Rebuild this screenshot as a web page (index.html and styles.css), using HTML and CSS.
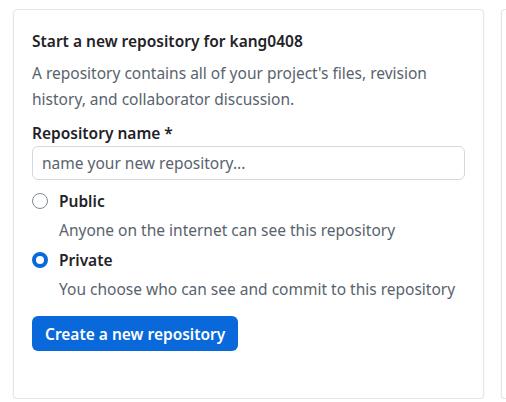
FILE: index.html
```html
<!DOCTYPE html>
<html>
<head>
<meta charset="utf-8">
<link rel="stylesheet" href="styles.css">
</head>
<body>
<div class="layout">
  <div class="card">
    <h2 class="title">Start a new repository for kang0408</h2>
    <p class="desc">A repository contains all of your project's files, revision history, and collaborator discussion.</p>
    <label class="label" for="repo">Repository name *</label>
    <input id="repo" class="input" type="text" placeholder="name your new repository...">
    <div class="option">
      <span class="radio"></span>
      <div class="opt-text">
        <div class="opt-title">Public</div>
        <div class="opt-desc">Anyone on the internet can see this repository</div>
      </div>
    </div>
    <div class="option">
      <span class="radio checked"></span>
      <div class="opt-text">
        <div class="opt-title">Private</div>
        <div class="opt-desc">You choose who can see and commit to this repository</div>
      </div>
    </div>
    <button class="btn">Create a new repository</button>
  </div>
  <div class="card card-next"></div>
</div>
</body>
</html>
```
FILE: styles.css
```css
* { box-sizing: border-box; }
html, body { margin: 0; padding: 0; background: #ffffff; }
body {
  font-family: "Noto Sans", "Open Sans", sans-serif;
  color: #1f2328;
  overflow: hidden;
}
.layout {
  display: flex;
  gap: 17px;
  width: 506px;
  padding: 9px 0 0 13px;
}
.card {
  flex: 0 0 471px;
  height: 390px;
  border: 1px solid #e3e6ea;
  border-radius: 4px;
  box-shadow: 0 1px 2px rgba(31, 35, 40, 0.08);
  padding: 19px 18px;
  background: #fff;
}
.card-next {
  flex: 1 1 auto;
  min-width: 0;
  padding: 0;
  border-right: 0;
  border-radius: 4px 0 0 4px;
}
.title {
  margin: 0;
  font-size: 15.5px;
  font-weight: 600;
  line-height: 24px;
}
.desc {
  margin: 7px 0 0;
  font-size: 15.5px;
  line-height: 26px;
  color: #59636e;
}
.label {
  display: block;
  margin-top: 9px;
  font-size: 15.5px;
  font-weight: 600;
  line-height: 24px;
}
.input {
  display: block;
  width: 433px;
  height: 34px;
  margin-top: 1px;
  padding: 0 9px;
  border: 1px solid #d1d9e0;
  border-radius: 6px;
  font-family: inherit;
  font-size: 15.5px;
  color: #1f2328;
}
.input::placeholder { color: #59636e; }
.option {
  display: flex;
  gap: 11px;
  margin-top: 9px;
}
.option + .option { margin-top: 6px; }
.radio {
  flex: 0 0 16px;
  width: 16px;
  height: 16px;
  margin-top: 4px;
  border: 1px solid #818b98;
  border-radius: 50%;
}
.radio.checked { border: 4px solid #0969da; }
.opt-title {
  font-size: 15.5px;
  font-weight: 600;
  line-height: 24px;
}
.opt-desc {
  margin-top: 5px;
  font-size: 15.5px;
  line-height: 24px;
  color: #59636e;
  white-space: nowrap;
}
.btn {
  display: block;
  margin-top: 15px;
  height: 35px;
  padding: 0 13px;
  border: 0;
  border-radius: 6px;
  background: #0969da;
  color: #fff;
  font-family: inherit;
  font-size: 15.5px;
  font-weight: 600;
}
```
